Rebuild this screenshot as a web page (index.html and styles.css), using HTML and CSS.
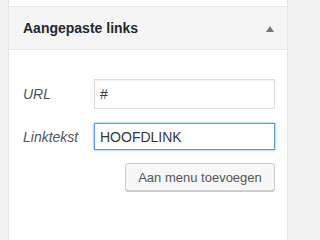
FILE: index.html
```html
<!DOCTYPE html>
<html>
<head>
<meta charset="utf-8">
<link rel="stylesheet" href="styles.css">
</head>
<body>
<div class="panel">
  <div class="prev"></div>
  <div class="head">
    <h3 class="title">Aangepaste links</h3>
    <span class="arrow"></span>
  </div>
  <div class="content">
    <div class="row">
      <label class="lbl">URL</label>
      <div class="field url">#</div>
    </div>
    <div class="row row-gap">
      <label class="lbl">Linktekst</label>
      <div class="field text focus">HOOFDLINK</div>
    </div>
    <div class="actions">
      <button class="btn">Aan menu toevoegen</button>
    </div>
  </div>
</div>
</body>
</html>
```
FILE: styles.css
```css
html, body {
  margin: 0;
  padding: 0;
  background: #f1f1f1;
  font-family: "Liberation Sans", Arial, sans-serif;
}
.panel {
  margin-left: 8px;
  width: 280px;
  min-height: 100vh;
  box-sizing: border-box;
  background: #fff;
  border-left: 1px solid #e5e5e5;
  border-right: 1px solid #e5e5e5;
}
.prev {
  height: 6px;
  border-bottom: 1px solid #e5e5e5;
}
.head {
  height: 42px;
  background: #f5f5f5;
  border-bottom: 1px solid #e5e5e5;
  display: flex;
  align-items: center;
  justify-content: space-between;
  padding: 0 13px 0 14px;
}
.title {
  margin: 0;
  font-size: 14px;
  font-weight: bold;
  color: #23282d;
}
.arrow {
  width: 0;
  height: 0;
  border-left: 4px solid transparent;
  border-right: 4px solid transparent;
  border-bottom: 6px solid #72777c;
  margin-top: 1px;
}
.content {
  padding: 29px 12px 0 14px;
}
.row {
  display: flex;
  align-items: center;
}
.row-gap {
  margin-top: 14px;
}
.lbl {
  width: 71px;
  font-style: italic;
  font-size: 14px;
  color: #555;
}
.field {
  width: 181px;
  box-sizing: border-box;
  border: 1px solid #ddd;
  box-shadow: inset 0 1px 2px rgba(0,0,0,0.07);
  padding: 0 5px;
  font-size: 14px;
  color: #32373c;
  display: flex;
  align-items: center;
}
.url {
  height: 30px;
}
.text {
  height: 27px;
}
.focus {
  border-color: #5b9dd9;
  box-shadow: 0 0 2px rgba(30,140,190,0.8);
}
.actions {
  display: flex;
  justify-content: flex-end;
  margin-top: 13px;
}
.btn {
  height: 28px;
  width: 150px;
  box-sizing: border-box;
  border: 1px solid #ccc;
  border-radius: 3px;
  background: #f7f7f7;
  box-shadow: 0 1px 0 #ccc;
  color: #555;
  font-family: "Liberation Sans", Arial, sans-serif;
  font-size: 13px;
  padding: 0 10px;
}
```
